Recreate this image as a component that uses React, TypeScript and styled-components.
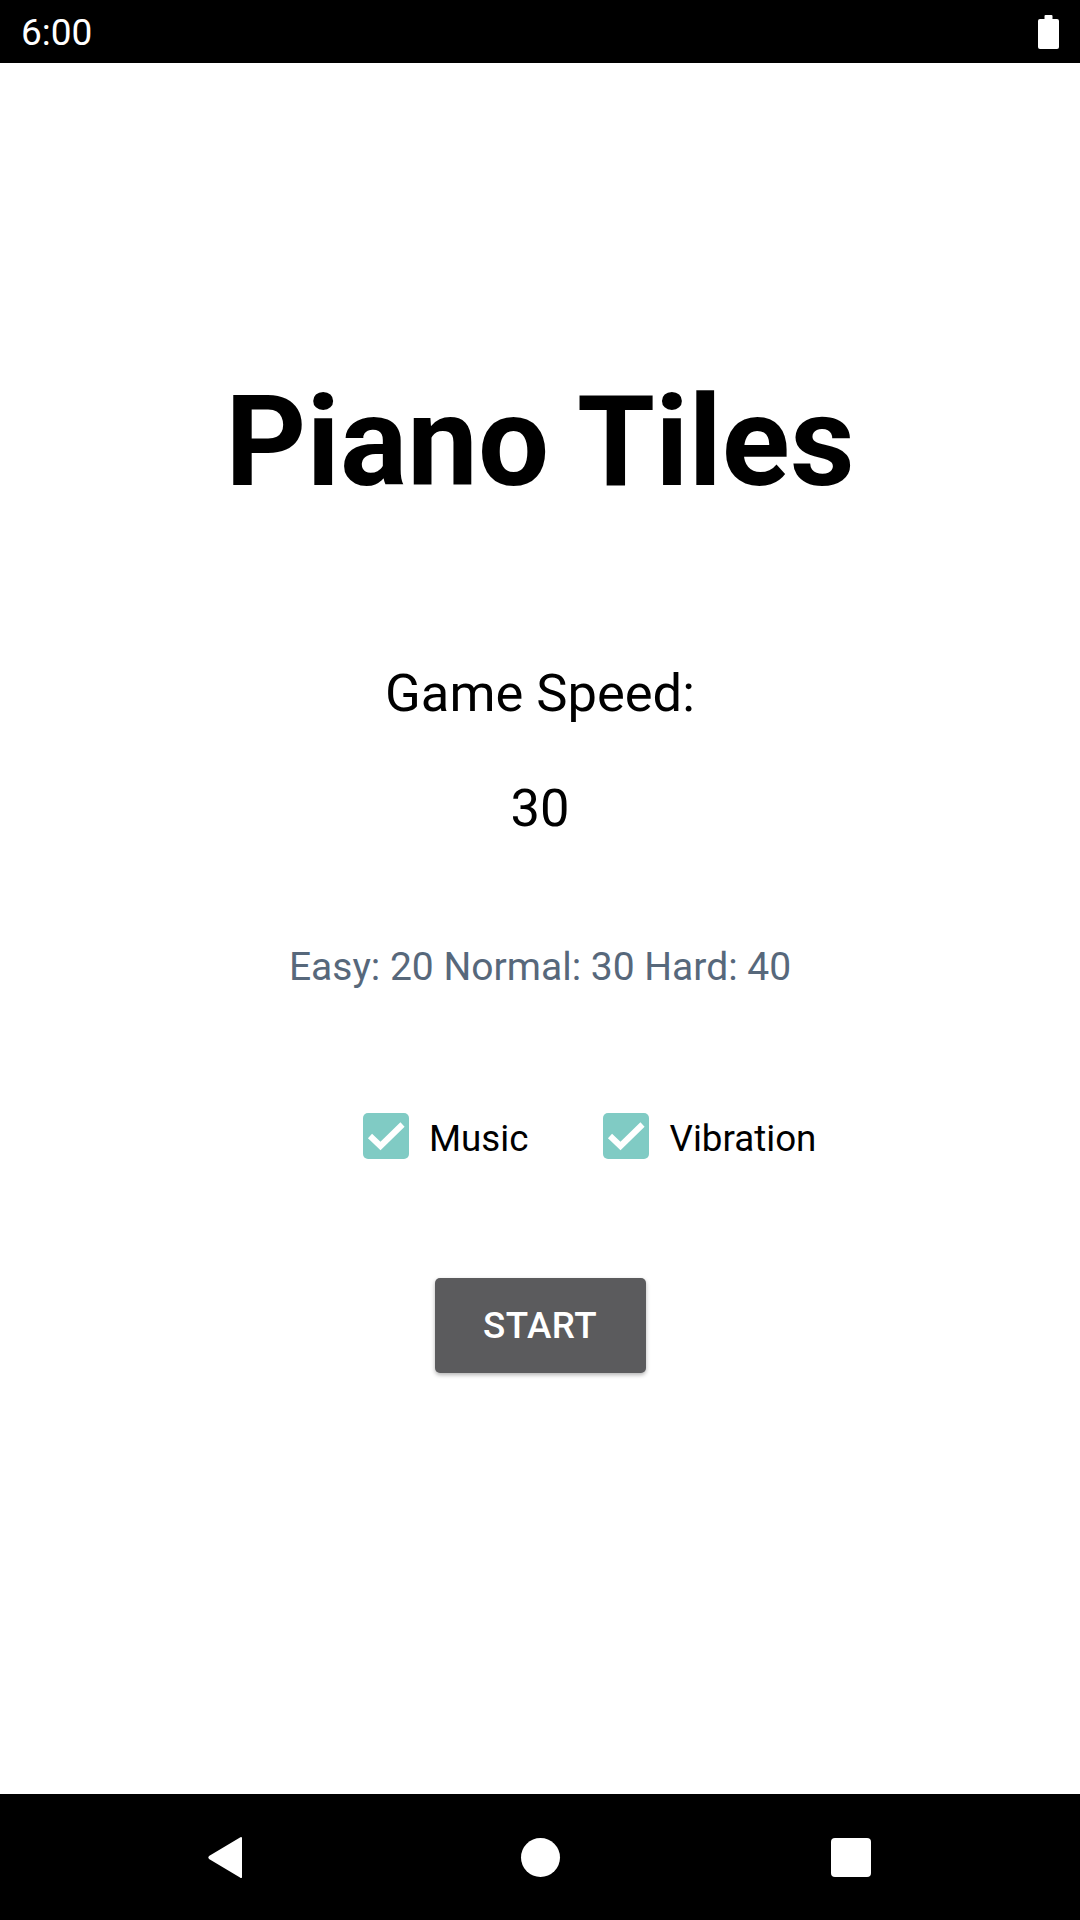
import React from "react";
import styled, { createGlobalStyle } from "styled-components";

const GlobalStyle = createGlobalStyle`
  html, body {
    margin: 0;
    padding: 0;
    background: #ffffff;
  }
  body {
    font-family: Roboto, "Noto Sans", sans-serif;
  }
  * { box-sizing: border-box; }
`;

const Screen = styled.div`
  width: 1080px;
  height: 1920px;
  display: flex;
  flex-direction: column;
  background: #ffffff;
  overflow: hidden;
`;

const StatusBar = styled.div`
  height: 63px;
  flex: 0 0 63px;
  background: #000;
  display: flex;
  align-items: center;
  justify-content: space-between;
  padding: 0 21px 0 21px;
`;

const Clock = styled.span`
  color: #fff;
  font-family: Roboto, sans-serif;
  font-size: 37px;
  line-height: 1;
  margin-top: 2px;
`;

const Main = styled.main`
  flex: 1;
  display: flex;
  flex-direction: column;
  align-items: center;
  padding-top: 305px;
`;

const Title = styled.h1`
  margin: 0;
  font-family: Roboto, sans-serif;
  font-weight: 700;
  font-size: 126px;
  line-height: normal;
  color: #000;
`;

const Label = styled.div<{ $top: number }>`
  margin-top: ${(p) => p.$top}px;
  font-family: Roboto, sans-serif;
  font-size: 52.5px;
  line-height: normal;
  color: #000;
`;

const Hint = styled.div`
  margin-top: 105px;
  font-family: Roboto, sans-serif;
  font-size: 39px;
  line-height: normal;
  color: #57687b;
`;

const CheckRow = styled.div`
  align-self: stretch;
  margin-top: 123px;
  padding-left: 363px;
  display: flex;
  align-items: flex-start;
  gap: 75px;
`;

const CheckItem = styled.label`
  display: flex;
  align-items: flex-start;
  gap: 20px;
`;

const CheckText = styled.span`
  margin-top: 4px;
  font-family: Roboto, sans-serif;
  font-size: 36.75px;
  line-height: normal;
  color: #000;
`;

const StartButton = styled.button`
  margin-top: 118px;
  width: 211px;
  height: 95px;
  border: none;
  border-radius: 5px;
  background: #5b5b5d;
  color: #fff;
  font-family: Roboto, sans-serif;
  font-weight: 500;
  font-size: 36.75px;
  letter-spacing: 0.5px;
  box-shadow: 0 2px 4px rgba(0, 0, 0, 0.3);
  padding: 0;
`;

const NavBar = styled.div`
  height: 126px;
  flex: 0 0 126px;
  background: #000;
  display: grid;
  grid-template-columns: 450px 180px 450px;
  align-items: center;
  justify-items: center;
`;

const NavSlot = styled.div<{ $shift: number }>`
  display: flex;
  align-items: center;
  justify-content: center;
  transform: translateX(${(p) => p.$shift}px);
`;

const HomeDot = styled.div`
  width: 39px;
  height: 39px;
  border-radius: 50%;
  background: #fff;
`;

const RecentSquare = styled.div`
  width: 40px;
  height: 39px;
  border-radius: 4px;
  background: #fff;
`;

const Battery = () => (
  <svg width="21" height="34" viewBox="0 0 21 34">
    <rect x="6.5" y="0" width="8" height="6" rx="1" fill="#fff" />
    <rect x="0" y="4" width="21" height="30" rx="2" fill="#fff" />
  </svg>
);

const CheckBox = () => (
  <svg width="46" height="46" viewBox="0 0 46 46">
    <rect x="0" y="0" width="46" height="46" rx="5" fill="#80cbc4" />
    <polyline
      points="7,23 17.5,33 39.5,11.5"
      fill="none"
      stroke="#fff"
      strokeWidth="6"
    />
  </svg>
);

const BackArrow = () => (
  <svg width="37" height="43" viewBox="0 0 37 43">
    <path d="M35 1.5 L35 41.5 Q34 42.5 33 41.5 L2 23 Q0.5 21.5 2 20 L33 1.5 Q34 0.5 35 1.5 Z" fill="#fff" />
  </svg>
);

export default function App() {
  return (
    <>
      <GlobalStyle />
      <Screen>
        <StatusBar>
          <Clock>6:00</Clock>
          <Battery />
        </StatusBar>
        <Main>
          <Title>Piano Tiles</Title>
          <Label $top={146}>Game Speed:</Label>
          <Label $top={53}>30</Label>
          <Hint>Easy: 20 Normal: 30 Hard: 40</Hint>
          <CheckRow>
            <CheckItem>
              <CheckBox />
              <CheckText>Music</CheckText>
            </CheckItem>
            <CheckItem>
              <CheckBox />
              <CheckText>Vibration</CheckText>
            </CheckItem>
          </CheckRow>
          <StartButton>START</StartButton>
        </Main>
        <NavBar>
          <NavSlot $shift={0}>
            <BackArrow />
          </NavSlot>
          <NavSlot $shift={0}>
            <HomeDot />
          </NavSlot>
          <NavSlot $shift={-4}>
            <RecentSquare />
          </NavSlot>
        </NavBar>
      </Screen>
    </>
  );
}
